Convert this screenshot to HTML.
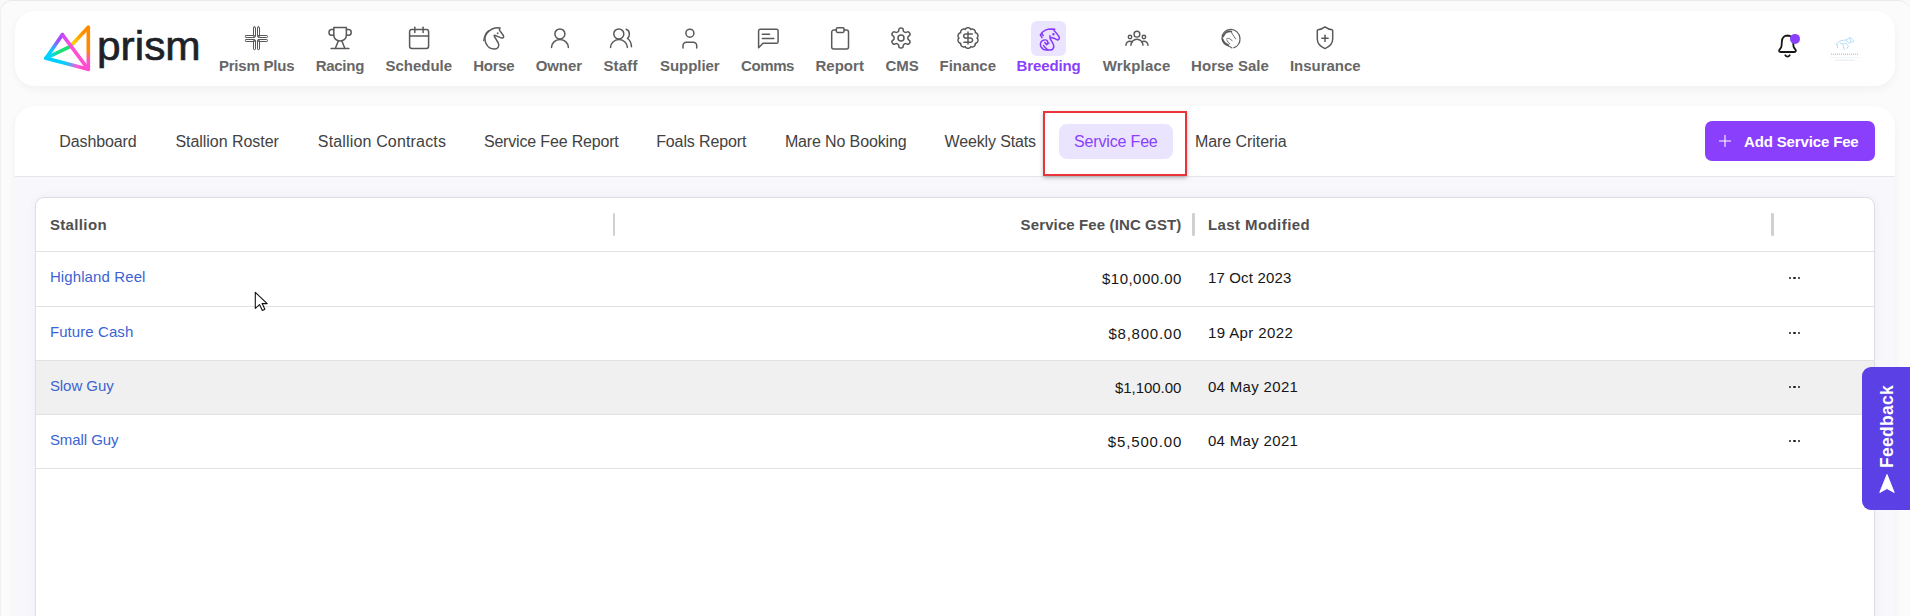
<!DOCTYPE html><html><head><meta charset='utf-8'><style>
*{box-sizing:border-box;margin:0;padding:0}
html,body{width:1910px;height:616px;overflow:hidden;background:#f9f9f9;font-family:"Liberation Sans",sans-serif}
.a{position:absolute;white-space:nowrap}
#frame{position:absolute;left:0;top:0;width:1910px;height:660px;border-radius:12px;border-top:1px solid #eaeaea;border-left:1px solid #f0f0f0;background:#fbfbfb}
.card{position:absolute;left:15px;width:1880px;background:#fff;border-radius:20px;box-shadow:0 3px 9px rgba(0,0,0,0.045)}
.lb{position:absolute;top:56.6px;font-size:15px;font-weight:bold;color:#676767;line-height:18px;white-space:nowrap}
.ic{position:absolute;width:24px;height:24px;overflow:visible}
.ic g{fill:none;stroke:#595959;stroke-linecap:round;stroke-linejoin:round}
.tb{position:absolute;top:131.8px;font-size:16px;color:#424242;line-height:20px;white-space:nowrap}
.th{position:absolute;top:215.9px;font-size:15px;font-weight:bold;color:#505050;white-space:nowrap;line-height:18px}
.td{position:absolute;font-size:15px;color:#161616;white-space:nowrap;line-height:18px}
.lk{position:absolute;font-size:15px;color:#3b64d2;white-space:nowrap;line-height:18px}
.sep{position:absolute;top:213px;width:2.4px;height:22.6px;background:#d0d0d0;border-radius:1.2px}
.hl{position:absolute;left:36px;width:1838px;height:1px;background:#e2e2e2}
.dt{position:absolute;width:2.3px;height:2.3px;border-radius:50%;background:#1e1e1e}
</style></head><body>
<div id="frame"></div>
<div class="card" style="top:11px;height:75px"></div>
<div class="card" style="top:106px;height:620px;overflow:hidden"><div class="a" style="left:0;top:70px;width:1880px;height:1px;background:#e5e5eb"></div><div class="a" style="left:0;top:71px;width:1880px;height:560px;background:#f7f7fc"></div></div>
<svg class="a" style="left:40px;top:22px" width="56" height="52" viewBox="40 22 56 52">
<defs>
<linearGradient id="g1" x1="62" y1="34" x2="46" y2="58" gradientUnits="userSpaceOnUse"><stop offset="0.25" stop-color="#a64bff"/><stop offset="0.7" stop-color="#00d0ff"/></linearGradient>
<linearGradient id="g2" x1="62" y1="34" x2="88" y2="69" gradientUnits="userSpaceOnUse"><stop offset="0" stop-color="#c04cff"/><stop offset="0.3" stop-color="#ff4fd8"/><stop offset="1" stop-color="#ff4fd0"/></linearGradient>
<linearGradient id="g3" x1="46" y1="58" x2="88" y2="69" gradientUnits="userSpaceOnUse"><stop offset="0.45" stop-color="#00d0ff"/><stop offset="0.75" stop-color="#ff55d8"/><stop offset="1" stop-color="#ff40c8"/></linearGradient>
<linearGradient id="g4" x1="88" y1="27" x2="88" y2="69" gradientUnits="userSpaceOnUse"><stop offset="0.55" stop-color="#ff8a00"/><stop offset="0.8" stop-color="#ff50d0"/></linearGradient>
<linearGradient id="g5" x1="50" y1="56" x2="88" y2="27" gradientUnits="userSpaceOnUse"><stop offset="0" stop-color="#00d8ff"/><stop offset="0.2" stop-color="#1ee07a"/><stop offset="0.45" stop-color="#20e070"/><stop offset="0.55" stop-color="#ffd000"/><stop offset="0.85" stop-color="#ff8c00"/></linearGradient>
</defs>
<g fill="none" stroke-width="3.6" stroke-linecap="round" stroke-linejoin="round">
<path d="M46 58.2L70.5 46.3L88.3 27.3" stroke="url(#g5)"/>
<path d="M88.3 27.3V69.3" stroke="url(#g4)"/>
<path d="M46 58.2L62.4 34.6" stroke="url(#g1)"/>
<path d="M46 58.2L88.3 69.3" stroke="url(#g3)"/>
<path d="M62.4 34.6L88.3 69.3" stroke="url(#g2)"/>
</g></svg>
<div class="a" style="left:96.5px;top:21.8px;font-size:44px;line-height:50px;color:#202127;-webkit-text-stroke:0.7px #202127;transform-origin:0 0;transform:scale(0.964,0.941)">prism</div>
<div class="lb" style="left:218.90000000000003px;letter-spacing:-0.200px;">Prism Plus</div>
<svg class="ic" style="left:244px;top:26px" viewBox="0 0 24 24"><g style="stroke-width:1.0"><rect x="9.5" y="0.9" width="2" height="10" rx="0.7"/><rect x="13.5" y="0.9" width="2" height="10" rx="0.7"/><rect x="9.5" y="14" width="2" height="9.6" rx="0.7"/><rect x="13.5" y="14" width="2" height="9.6" rx="0.7"/><rect x="1.4" y="9.5" width="9.6" height="2" rx="0.7"/><rect x="1.4" y="13.5" width="9.6" height="2" rx="0.7"/><rect x="14" y="9.5" width="9.5" height="2" rx="0.7"/><rect x="14" y="13.5" width="9.5" height="2" rx="0.7"/></g></svg>
<div class="lb" style="left:315.69999999999993px;letter-spacing:-0.280px;">Racing</div>
<svg class="ic" style="left:327.5px;top:26.3px" viewBox="0 0 24 24"><g style="stroke-width:1.5"><path d="M5.8 1.4h12.6v8.2a6.3 5.4 0 0 1-12.6 0z"/><path d="M5.8 3.6H3.6a2.6 2.8 0 0 0 0 5.6h2.2"/><path d="M18.4 3.6h2.2a2.6 2.8 0 0 1 0 5.6h-2.2"/><path d="M10.3 15l-2.9 7.2"/><path d="M13.9 15l2.9 7.2"/><path d="M3.1 22.4h17.8"/></g></svg>
<div class="lb" style="left:385.40000000000003px;">Schedule</div>
<svg class="ic" style="left:406.5px;top:26.3px" viewBox="0 0 24 24"><g style="stroke-width:1.5"><rect x="2.6" y="3.6" width="19" height="18.9" rx="2.2"/><path d="M7.8 1.2v5.2"/><path d="M16.1 1.2v5.2"/><path d="M2.6 10h19"/></g></svg>
<div class="lb" style="left:473.19999999999993px;letter-spacing:-0.250px;">Horse</div>
<svg class="ic" style="left:482px;top:26px" viewBox="0 0 24 24"><g style="stroke-width:1.5"><path d="M17 1.8C12.5 1.6 8.2 3.4 5.3 6.8 2.6 10 2.6 14.6 4.2 17.8c1.6 3.5 4.8 5.3 8.2 5.2 3.6-.2 5.4-3 3.9-6L12.2 10.2c-.2-.9.3-1.2 1-.8 1.6 1 3.9 1.6 6 2.4.9.3 1.8.5 2.3-.4.5-.8 0-1.6-.5-2.4L17.6 4.4c-.4-.7-.3-1.6.5-2.4"/><path d="M6.5 4.6C4.2 6.2 2.4 9.2 1.6 14.6M4.5 6.4L3 9.5M3.2 9L2.2 12.4" style="stroke-width:1.1"/><circle cx="15.5" cy="7.2" r="0.5" style="fill:#595959;stroke-width:0.8"/></g></svg>
<div class="lb" style="left:535.6999999999999px;letter-spacing:-0.100px;">Owner</div>
<svg class="ic" style="left:547.5px;top:26px" viewBox="0 0 24 24"><g style="stroke-width:1.5"><circle cx="11.9" cy="7.9" r="5"/><path d="M3.5 21.5A8.45 8 0 0 1 20.4 21.5"/></g></svg>
<div class="lb" style="left:603.3999999999999px;letter-spacing:0.200px;">Staff</div>
<svg class="ic" style="left:608.5px;top:26px" viewBox="0 0 24 24"><g style="stroke-width:1.5"><circle cx="9.8" cy="7.9" r="5"/><path d="M1.5 21.6A8.45 8 0 0 1 18.4 21.6"/><path d="M17.2 3.2C19.2 4 20.4 5.8 20.4 8c0 1.9-.8 3.4-1.9 4.5 2.3 1.6 3.8 4.7 4 8.2"/></g></svg>
<div class="lb" style="left:660.0px;letter-spacing:-0.057px;">Supplier</div>
<svg class="ic" style="left:677.5px;top:26px" viewBox="0 0 24 24"><g style="stroke-width:1.5"><circle cx="11.9" cy="7.2" r="4"/><path d="M5 22v-2.4a3.3 3.3 0 0 1 3.3-3.3h7.1a3.3 3.3 0 0 1 3.3 3.3V22"/></g></svg>
<div class="lb" style="left:741.0px;letter-spacing:-0.400px;">Comms</div>
<svg class="ic" style="left:755.5px;top:26px" viewBox="0 0 24 24"><g style="stroke-width:1.5"><path d="M4.2 3.3h16.3a1.6 1.6 0 0 1 1.6 1.6v10.8a1.6 1.6 0 0 1-1.6 1.6H7L2.6 21.8V4.9a1.6 1.6 0 0 1 1.6-1.6z"/><path d="M6.3 8.3h7.2"/><path d="M6.3 12.5h11.6"/></g></svg>
<div class="lb" style="left:815.3999999999999px;letter-spacing:0.040px;">Report</div>
<svg class="ic" style="left:827.5px;top:26px" viewBox="0 0 24 24"><g style="stroke-width:1.5"><rect x="8.3" y="1.8" width="7.8" height="4.6" rx="1.3"/><path d="M16.1 4.1h2.4a2 2 0 0 1 2 2v14.8a2 2 0 0 1-2 2H5.7a2 2 0 0 1-2-2V6.1a2 2 0 0 1 2-2h2.6"/></g></svg>
<div class="lb" style="left:885.5px;letter-spacing:-0.100px;">CMS</div>
<svg class="ic" style="left:889.4px;top:26.4px" viewBox="0 0 24 24"><g style="stroke-width:1.5"><path d="M12.22 2h-.44a2 2 0 0 0-2 2v.18a2 2 0 0 1-1 1.73l-.43.25a2 2 0 0 1-2 0l-.15-.08a2 2 0 0 0-2.73.73l-.22.38a2 2 0 0 0 .73 2.73l.15.1a2 2 0 0 1 1 1.72v.51a2 2 0 0 1-1 1.74l-.15.09a2 2 0 0 0-.73 2.73l.22.38a2 2 0 0 0 2.73.73l.15-.08a2 2 0 0 1 2 0l.43.25a2 2 0 0 1 1 1.73V20a2 2 0 0 0 2 2h.44a2 2 0 0 0 2-2v-.18a2 2 0 0 1 1-1.73l.43-.25a2 2 0 0 1 2 0l.15.08a2 2 0 0 0 2.73-.73l.22-.39a2 2 0 0 0-.73-2.73l-.15-.08a2 2 0 0 1-1-1.74v-.5a2 2 0 0 1 1-1.74l.15-.09a2 2 0 0 0 .73-2.73l-.22-.38a2 2 0 0 0-2.73-.73l-.15.08a2 2 0 0 1-2 0l-.43-.25a2 2 0 0 1-1-1.73V4a2 2 0 0 0-2-2z"/><circle cx="12" cy="12" r="3"/></g></svg>
<div class="lb" style="left:939.5px;letter-spacing:-0.033px;">Finance</div>
<svg class="ic" style="left:955.5px;top:26.4px" viewBox="0 0 24 24"><g style="stroke-width:1.5"><path d="M12.00 1.70L12.16 1.70L12.32 1.72L12.48 1.74L12.64 1.77L12.80 1.80L12.96 1.85L13.12 1.90L13.27 1.96L13.42 2.03L13.57 2.10L13.71 2.19L13.85 2.28L13.99 2.38L14.13 2.49L14.26 2.60L14.38 2.73L14.50 2.87L14.61 3.02L14.71 3.19L14.78 3.44L14.99 3.28L15.17 3.20L15.35 3.14L15.52 3.10L15.70 3.07L15.87 3.05L16.04 3.05L16.21 3.05L16.38 3.05L16.55 3.07L16.71 3.10L16.88 3.13L17.04 3.17L17.19 3.22L17.35 3.28L17.49 3.34L17.64 3.41L17.78 3.49L17.92 3.58L18.05 3.67L18.18 3.77L18.31 3.87L18.42 3.98L18.54 4.10L18.64 4.22L18.74 4.35L18.84 4.48L18.93 4.62L19.01 4.77L19.09 4.91L19.15 5.07L19.21 5.23L19.27 5.39L19.31 5.55L19.35 5.72L19.37 5.90L19.39 6.08L19.39 6.27L19.37 6.46L19.28 6.71L19.54 6.70L19.74 6.74L19.91 6.80L20.08 6.87L20.24 6.95L20.39 7.04L20.53 7.13L20.67 7.23L20.80 7.34L20.93 7.45L21.05 7.57L21.16 7.69L21.26 7.82L21.36 7.95L21.45 8.09L21.53 8.22L21.61 8.37L21.68 8.51L21.74 8.66L21.80 8.82L21.84 8.97L21.88 9.13L21.91 9.29L21.93 9.45L21.95 9.61L21.95 9.78L21.95 9.94L21.94 10.10L21.92 10.27L21.90 10.43L21.86 10.60L21.82 10.76L21.77 10.92L21.70 11.08L21.63 11.24L21.55 11.40L21.46 11.55L21.35 11.71L21.22 11.86L21.00 12.00L21.22 12.14L21.35 12.29L21.46 12.45L21.55 12.60L21.63 12.76L21.70 12.92L21.77 13.08L21.82 13.24L21.86 13.40L21.90 13.57L21.92 13.73L21.94 13.90L21.95 14.06L21.95 14.22L21.95 14.39L21.93 14.55L21.91 14.71L21.88 14.87L21.84 15.03L21.80 15.18L21.74 15.34L21.68 15.49L21.61 15.63L21.53 15.78L21.45 15.91L21.36 16.05L21.26 16.18L21.16 16.31L21.05 16.43L20.93 16.55L20.80 16.66L20.67 16.77L20.53 16.87L20.39 16.96L20.24 17.05L20.08 17.13L19.91 17.20L19.74 17.26L19.54 17.30L19.28 17.29L19.37 17.54L19.39 17.73L19.39 17.92L19.37 18.10L19.35 18.28L19.31 18.45L19.27 18.61L19.21 18.77L19.15 18.93L19.09 19.09L19.01 19.23L18.93 19.38L18.84 19.52L18.74 19.65L18.64 19.78L18.54 19.90L18.42 20.02L18.31 20.13L18.18 20.23L18.05 20.33L17.92 20.42L17.78 20.51L17.64 20.59L17.49 20.66L17.35 20.72L17.19 20.78L17.04 20.83L16.88 20.87L16.71 20.90L16.55 20.93L16.38 20.95L16.21 20.95L16.04 20.95L15.87 20.95L15.70 20.93L15.52 20.90L15.35 20.86L15.17 20.80L14.99 20.72L14.78 20.56L14.71 20.81L14.61 20.98L14.50 21.13L14.38 21.27L14.26 21.40L14.13 21.51L13.99 21.62L13.85 21.72L13.71 21.81L13.57 21.90L13.42 21.97L13.27 22.04L13.12 22.10L12.96 22.15L12.80 22.20L12.64 22.23L12.48 22.26L12.32 22.28L12.16 22.30L12.00 22.30L11.84 22.30L11.68 22.28L11.52 22.26L11.36 22.23L11.20 22.20L11.04 22.15L10.88 22.10L10.73 22.04L10.58 21.97L10.43 21.90L10.29 21.81L10.15 21.72L10.01 21.62L9.87 21.51L9.74 21.40L9.62 21.27L9.50 21.13L9.39 20.98L9.29 20.81L9.22 20.56L9.01 20.72L8.83 20.80L8.65 20.86L8.48 20.90L8.30 20.93L8.13 20.95L7.96 20.95L7.79 20.95L7.62 20.95L7.45 20.93L7.29 20.90L7.12 20.87L6.96 20.83L6.81 20.78L6.65 20.72L6.51 20.66L6.36 20.59L6.22 20.51L6.08 20.42L5.95 20.33L5.82 20.23L5.69 20.13L5.58 20.02L5.46 19.90L5.36 19.78L5.26 19.65L5.16 19.52L5.07 19.38L4.99 19.23L4.91 19.09L4.85 18.93L4.79 18.77L4.73 18.61L4.69 18.45L4.65 18.28L4.63 18.10L4.61 17.92L4.61 17.73L4.63 17.54L4.72 17.29L4.46 17.30L4.26 17.26L4.09 17.20L3.92 17.13L3.76 17.05L3.61 16.96L3.47 16.87L3.33 16.77L3.20 16.66L3.07 16.55L2.95 16.43L2.84 16.31L2.74 16.18L2.64 16.05L2.55 15.91L2.47 15.78L2.39 15.63L2.32 15.49L2.26 15.34L2.20 15.18L2.16 15.03L2.12 14.87L2.09 14.71L2.07 14.55L2.05 14.39L2.05 14.22L2.05 14.06L2.06 13.90L2.08 13.73L2.10 13.57L2.14 13.40L2.18 13.24L2.23 13.08L2.30 12.92L2.37 12.76L2.45 12.60L2.54 12.45L2.65 12.29L2.78 12.14L3.00 12.00L2.78 11.86L2.65 11.71L2.54 11.55L2.45 11.40L2.37 11.24L2.30 11.08L2.23 10.92L2.18 10.76L2.14 10.60L2.10 10.43L2.08 10.27L2.06 10.10L2.05 9.94L2.05 9.78L2.05 9.61L2.07 9.45L2.09 9.29L2.12 9.13L2.16 8.97L2.20 8.82L2.26 8.66L2.32 8.51L2.39 8.37L2.47 8.22L2.55 8.09L2.64 7.95L2.74 7.82L2.84 7.69L2.95 7.57L3.07 7.45L3.20 7.34L3.33 7.23L3.47 7.13L3.61 7.04L3.76 6.95L3.92 6.87L4.09 6.80L4.26 6.74L4.46 6.70L4.72 6.71L4.63 6.46L4.61 6.27L4.61 6.08L4.63 5.90L4.65 5.72L4.69 5.55L4.73 5.39L4.79 5.23L4.85 5.07L4.91 4.91L4.99 4.77L5.07 4.62L5.16 4.48L5.26 4.35L5.36 4.22L5.46 4.10L5.58 3.98L5.69 3.87L5.82 3.77L5.95 3.67L6.08 3.58L6.22 3.49L6.36 3.41L6.51 3.34L6.65 3.28L6.81 3.22L6.96 3.17L7.12 3.13L7.29 3.10L7.45 3.07L7.62 3.05L7.79 3.05L7.96 3.05L8.13 3.05L8.30 3.07L8.48 3.10L8.65 3.14L8.83 3.20L9.01 3.28L9.22 3.44L9.29 3.19L9.39 3.02L9.50 2.87L9.62 2.73L9.74 2.60L9.87 2.49L10.01 2.38L10.15 2.28L10.29 2.19L10.43 2.10L10.58 2.03L10.73 1.96L10.88 1.90L11.04 1.85L11.20 1.80L11.36 1.77L11.52 1.74L11.68 1.72L11.84 1.70L12.00 1.70Z"/><path d="M16.3 8h-6.1a2.1 2.1 0 1 0 0 4.1h3.8a2.1 2.1 0 1 1 0 4.1H7.9"/><path d="M12 17.9V6.1"/></g></svg>
<div class="lb" style="left:1016.5px;color:#8a3ffc;letter-spacing:-0.114px;">Breeding</div>
<div class="lb" style="left:1102.7000000000003px;letter-spacing:0.171px;">Wrkplace</div>
<svg class="ic" style="left:1124.5px;top:26.2px" viewBox="0 0 24 24"><g style="stroke-width:1.4"><circle cx="11.95" cy="8.2" r="2.9"/><circle cx="5" cy="11" r="1.75"/><circle cx="18.9" cy="11" r="1.75"/><path d="M5.9 19.3A6 6 0 0 1 17.95 19.3"/><path d="M0.9 19.3C1.2 16.8 3 15.3 5 15.3c1 0 1.8.3 2.4.7"/><path d="M23 19.3C22.7 16.8 20.9 15.3 18.9 15.3c-1 0-1.8.3-2.4.7"/></g></svg>
<div class="lb" style="left:1191.1000000000001px;letter-spacing:0.022px;">Horse Sale</div>
<svg class="ic" style="left:1218.6px;top:25.6px" viewBox="0 0 24 24"><g style="stroke-width:1.2"><path d="M14.8 21.8C19 20.2 21.2 16.6 21 12.4 20.7 7 16.4 3.3 11.6 3.4 6.7 3.5 2.6 7.6 3 12.5c.3 4 3.4 6.6 7.4 8 .9.3 1.8.8 2.4 1.4" style="stroke-width:1.2"/><path d="M4.2 10.5C5.5 7 8.5 5.2 12.3 5.5M3.6 13.2c.6 2.6 2.8 4.6 5.8 5.8" style="stroke-width:1.7"/><path d="M12.3 5.8l1.3 2.6 1.4 2 1.6 2.5M7.5 13c1.2-.9 2.6-.7 3.8.2l1.8 1.4M8 14.5c.6 1.3 1.5 2.4 2.7 3.3" style="stroke-width:0.9"/></g></svg>
<div class="lb" style="left:1289.8999999999999px;letter-spacing:-0.025px;">Insurance</div>
<svg class="ic" style="left:1313.3px;top:26.3px" viewBox="0 0 24 24"><g style="stroke-width:1.5"><path d="M12 0.9c2.1 1.6 4.4 2.6 6.9 2.9a.9.9 0 0 1 .8.9V13c0 4.6-3 7.6-7.7 9.6C7.3 20.6 4.3 17.6 4.3 13V4.7a.9.9 0 0 1 .8-.9C7.6 3.5 9.9 2.5 12 .9z"/><path d="M8.9 12.3h6.2"/><path d="M12 9.2v6.2"/></g></svg>
<div class="a" style="left:1031px;top:21px;width:35px;height:35px;border-radius:6px;background:#ebe4ff"></div>
<svg class="ic" style="left:1036.5px;top:26.5px;width:24px;height:24px" viewBox="0 0 24 24"><g style="fill:none;stroke:#8639f8;stroke-width:1.5;stroke-linecap:round;stroke-linejoin:round"><path d="M3.4 7.8C4.6 5.6 6.4 3.9 8.4 3.1 10.2 2.4 12.2 2.1 14 2.1L17.6 2.2"/><path d="M3.4 7.8L5 10.6M4.6 6.2L6.2 8.6"/><path d="M17.6 2.2L16.7 3C18.6 5 20.6 7.6 22.1 9.9 22.7 10.9 22.1 12.5 20.7 13 19.2 12.2 17.2 11 13.8 10.6"/><path d="M12.9 8.8C12.7 10.8 13.4 12.6 14.7 14.4 16 16.3 17.3 18.2 16.6 20.4 15.9 22.6 13.2 23.4 10.8 22.9 8.5 23.3 5.6 22.4 4 19.8 2.7 17.5 3.5 14.5 5.8 13.4 7.6 12.5 9.8 12.9 10.6 14.3 11.2 15.5 10.6 17 9.5 17.4"/><path d="M7.8 15.6L9.5 17.4 11.9 16.2M6.6 18.5C7.3 20.3 9 21.2 10.8 22.9"/><circle cx="16.4" cy="7.3" r="0.5" style="fill:#8639f8"/></g></svg>
<svg class="a" style="left:1772px;top:30px" width="32" height="32" viewBox="1772 30 32 32"><g fill="none" stroke="#161616" stroke-width="1.8" stroke-linecap="round" stroke-linejoin="round"><path d="M1787.5 35.5c-3.3 0-5.4 2.6-5.6 5.7l-.4 5.1c-.1 1-.6 1.6-1.4 2.6-.8 1-1.2 1.6-.9 2.3.2.6.7.8 1.5.8h13.6c.8 0 1.3-.2 1.5-.8.3-.7-.1-1.3-.9-2.3-.8-1-1.3-1.6-1.4-2.6l-.4-5.1c-.2-3.1-2.3-5.7-5.6-5.7z"/><path d="M1785.3 55.3c.6.9 1.3 1.3 2.2 1.3s1.6-.4 2.2-1.3"/></g><circle cx="1795" cy="38.9" r="5" fill="#8a3ffc"/></svg>
<svg class="a" style="left:1826px;top:32px" width="40" height="34" viewBox="1826 32 40 34"><g fill="none" stroke="#8fd0f2" stroke-width="0.8" stroke-linecap="round" opacity="0.9"><path d="M1836.5 44.5c1.2-2.6 3.8-4 7-4.2 2.6-.2 4.6-1.2 6.4-2.8 1.6.6 2.8 1.8 3.3 3.3.3 1-.4 1.8-1.1 2.4"/><path d="M1837 44.6l.6 3.2M1840.5 43.6c1.8.4 3.6.3 5.4-.3l2.6 2.6-1.6 2.6M1843 45l1.2 4.6M1846.5 40.5l2.2 2.6 2.2-1M1849.5 38.5l1.6 3"/></g><g stroke="#9aa0a8" stroke-width="1" stroke-dasharray="1.1 0.9" opacity="0.8"><path d="M1831 54.2h28"/></g><path d="M1830.5 57.5h29" stroke="#dff0fa" stroke-width="0.6"/><g stroke="#b8bcc2" stroke-width="0.8" stroke-dasharray="1 1" opacity="0.8"><path d="M1835.5 60.1h19"/></g></svg>
<div class="a" style="left:1059px;top:124px;width:113.5px;height:34.6px;border-radius:8px;background:#ebe4ff"></div>
<div class="tb" style="left:59.29999999999997px;letter-spacing:-0.112px;">Dashboard</div>
<div class="tb" style="left:175.40000000000006px;letter-spacing:-0.036px;">Stallion Roster</div>
<div class="tb" style="left:317.8000000000001px;letter-spacing:0.159px;">Stallion Contracts</div>
<div class="tb" style="left:483.89999999999975px;letter-spacing:-0.171px;">Service Fee Report</div>
<div class="tb" style="left:656.2000000000005px;letter-spacing:-0.118px;">Foals Report</div>
<div class="tb" style="left:784.8999999999997px;letter-spacing:-0.136px;">Mare No Booking</div>
<div class="tb" style="left:944.6000000000003px;letter-spacing:-0.145px;">Weekly Stats</div>
<div class="tb" style="left:1074.0px;color:#8a3ffc;letter-spacing:-0.160px;">Service Fee</div>
<div class="tb" style="left:1194.900000000001px;letter-spacing:-0.050px;">Mare Criteria</div>
<div class="a" style="left:1043px;top:111.3px;width:143.5px;height:64.5px;border:2px solid #e8343a;box-shadow:0 2px 4px rgba(0,0,0,0.25)"></div>
<div class="a" style="left:1705px;top:121px;width:170px;height:40px;border-radius:7px;background:#8a3ffc"></div>
<svg class="a" style="left:1717px;top:133px" width="16" height="16" viewBox="0 0 16 16"><path d="M8 2.3v11.2M2.4 8h11.2" stroke="#fff" stroke-width="1.1" stroke-linecap="round"/></svg>
<div class="a" style="left:1744.0px;top:132.8px;font-size:15px;line-height:18px;font-weight:bold;color:#fff;letter-spacing:-0.143px;">Add Service Fee</div>
<div class="a" style="left:35px;top:197px;width:1840px;height:460px;background:#fff;border:1px solid #dedee4;border-radius:9px;box-shadow:0 0 10px rgba(40,40,100,0.05)"></div>
<div class="th" style="left:49.899999999999984px;letter-spacing:0.357px;">Stallion</div>
<div class="th" style="right:728.5850000000005px;letter-spacing:0.115px;">Service Fee (INC GST)</div>
<div class="th" style="left:1207.900000000001px;letter-spacing:0.425px;">Last Modified</div>
<div class="sep" style="left:612.8px"></div>
<div class="sep" style="left:1192.2px"></div>
<div class="sep" style="left:1771.2px"></div>
<div class="hl" style="top:251px"></div>
<div class="hl" style="top:306px"></div>
<div class="lk" style="left:49.899999999999984px;top:267.90000000000003px;letter-spacing:0.108px;">Highland Reel</div>
<div class="td" style="right:728.2333333333324px;top:269.50000000000006px;letter-spacing:0.467px;">$10,000.00</div>
<div class="td" style="left:1207.900000000001px;top:268.8px;letter-spacing:0.170px;">17 Oct 2023</div>
<div class="dt" style="left:1788.9px;top:277.1px"></div>
<div class="dt" style="left:1793.4px;top:277.1px"></div>
<div class="dt" style="left:1797.9px;top:277.1px"></div>
<div class="hl" style="top:360px"></div>
<div class="lk" style="left:49.899999999999984px;top:322.90000000000003px;letter-spacing:0.080px;">Future Cash</div>
<div class="td" style="right:727.937499999999px;top:324.50000000000006px;letter-spacing:0.763px;">$8,800.00</div>
<div class="td" style="left:1207.8999999999992px;top:323.8px;letter-spacing:0.410px;">19 Apr 2022</div>
<div class="dt" style="left:1788.9px;top:331.6px"></div>
<div class="dt" style="left:1793.4px;top:331.6px"></div>
<div class="dt" style="left:1797.9px;top:331.6px"></div>
<div class="a" style="left:36px;top:361px;width:1838px;height:53px;background:#f0f0f0"></div>
<div class="hl" style="top:414px"></div>
<div class="lk" style="left:49.899999999999984px;top:376.90000000000003px;letter-spacing:-0.057px;">Slow Guy</div>
<div class="td" style="right:728.749999999999px;top:378.50000000000006px;letter-spacing:-0.050px;">$1,100.00</div>
<div class="td" style="left:1207.9000000000005px;top:377.8px;letter-spacing:0.330px;">04 May 2021</div>
<div class="dt" style="left:1788.9px;top:385.6px"></div>
<div class="dt" style="left:1793.4px;top:385.6px"></div>
<div class="dt" style="left:1797.9px;top:385.6px"></div>
<div class="hl" style="top:468px"></div>
<div class="lk" style="left:49.899999999999984px;top:430.90000000000003px;letter-spacing:-0.062px;">Small Guy</div>
<div class="td" style="right:727.862499999999px;top:432.50000000000006px;letter-spacing:0.838px;">$5,500.00</div>
<div class="td" style="left:1207.9000000000005px;top:431.8px;letter-spacing:0.330px;">04 May 2021</div>
<div class="dt" style="left:1788.9px;top:439.6px"></div>
<div class="dt" style="left:1793.4px;top:439.6px"></div>
<div class="dt" style="left:1797.9px;top:439.6px"></div>
<div class="a" style="left:1862px;top:366.5px;width:60px;height:143px;border-radius:9px;background:#5b40e6"></div>
<div class="a" style="left:1879.7px;top:467.8px;transform-origin:0 0;transform:rotate(-90deg);font-size:17.5px;line-height:15px;font-weight:bold;color:#fff;letter-spacing:0.300px;">Feedback</div>
<svg class="a" style="left:1877px;top:471.5px" width="20" height="22" viewBox="0 0 20 22"><path d="M2.8 20.5L10 2.5 17.2 20.5 10 16.5z" fill="#fff" stroke="#fff" stroke-width="1" stroke-linejoin="round"/></svg>
<svg class="a" style="left:250px;top:288px" width="24" height="28" viewBox="250 288 24 28"><path d="M255.3 292.3V308.4L259.5 304.6L262.4 310.4L264.9 309.3L262.1 303.6H267.2Z" fill="#fff" stroke="#111" stroke-width="1.1" stroke-linejoin="round"/></svg>
</body></html>
